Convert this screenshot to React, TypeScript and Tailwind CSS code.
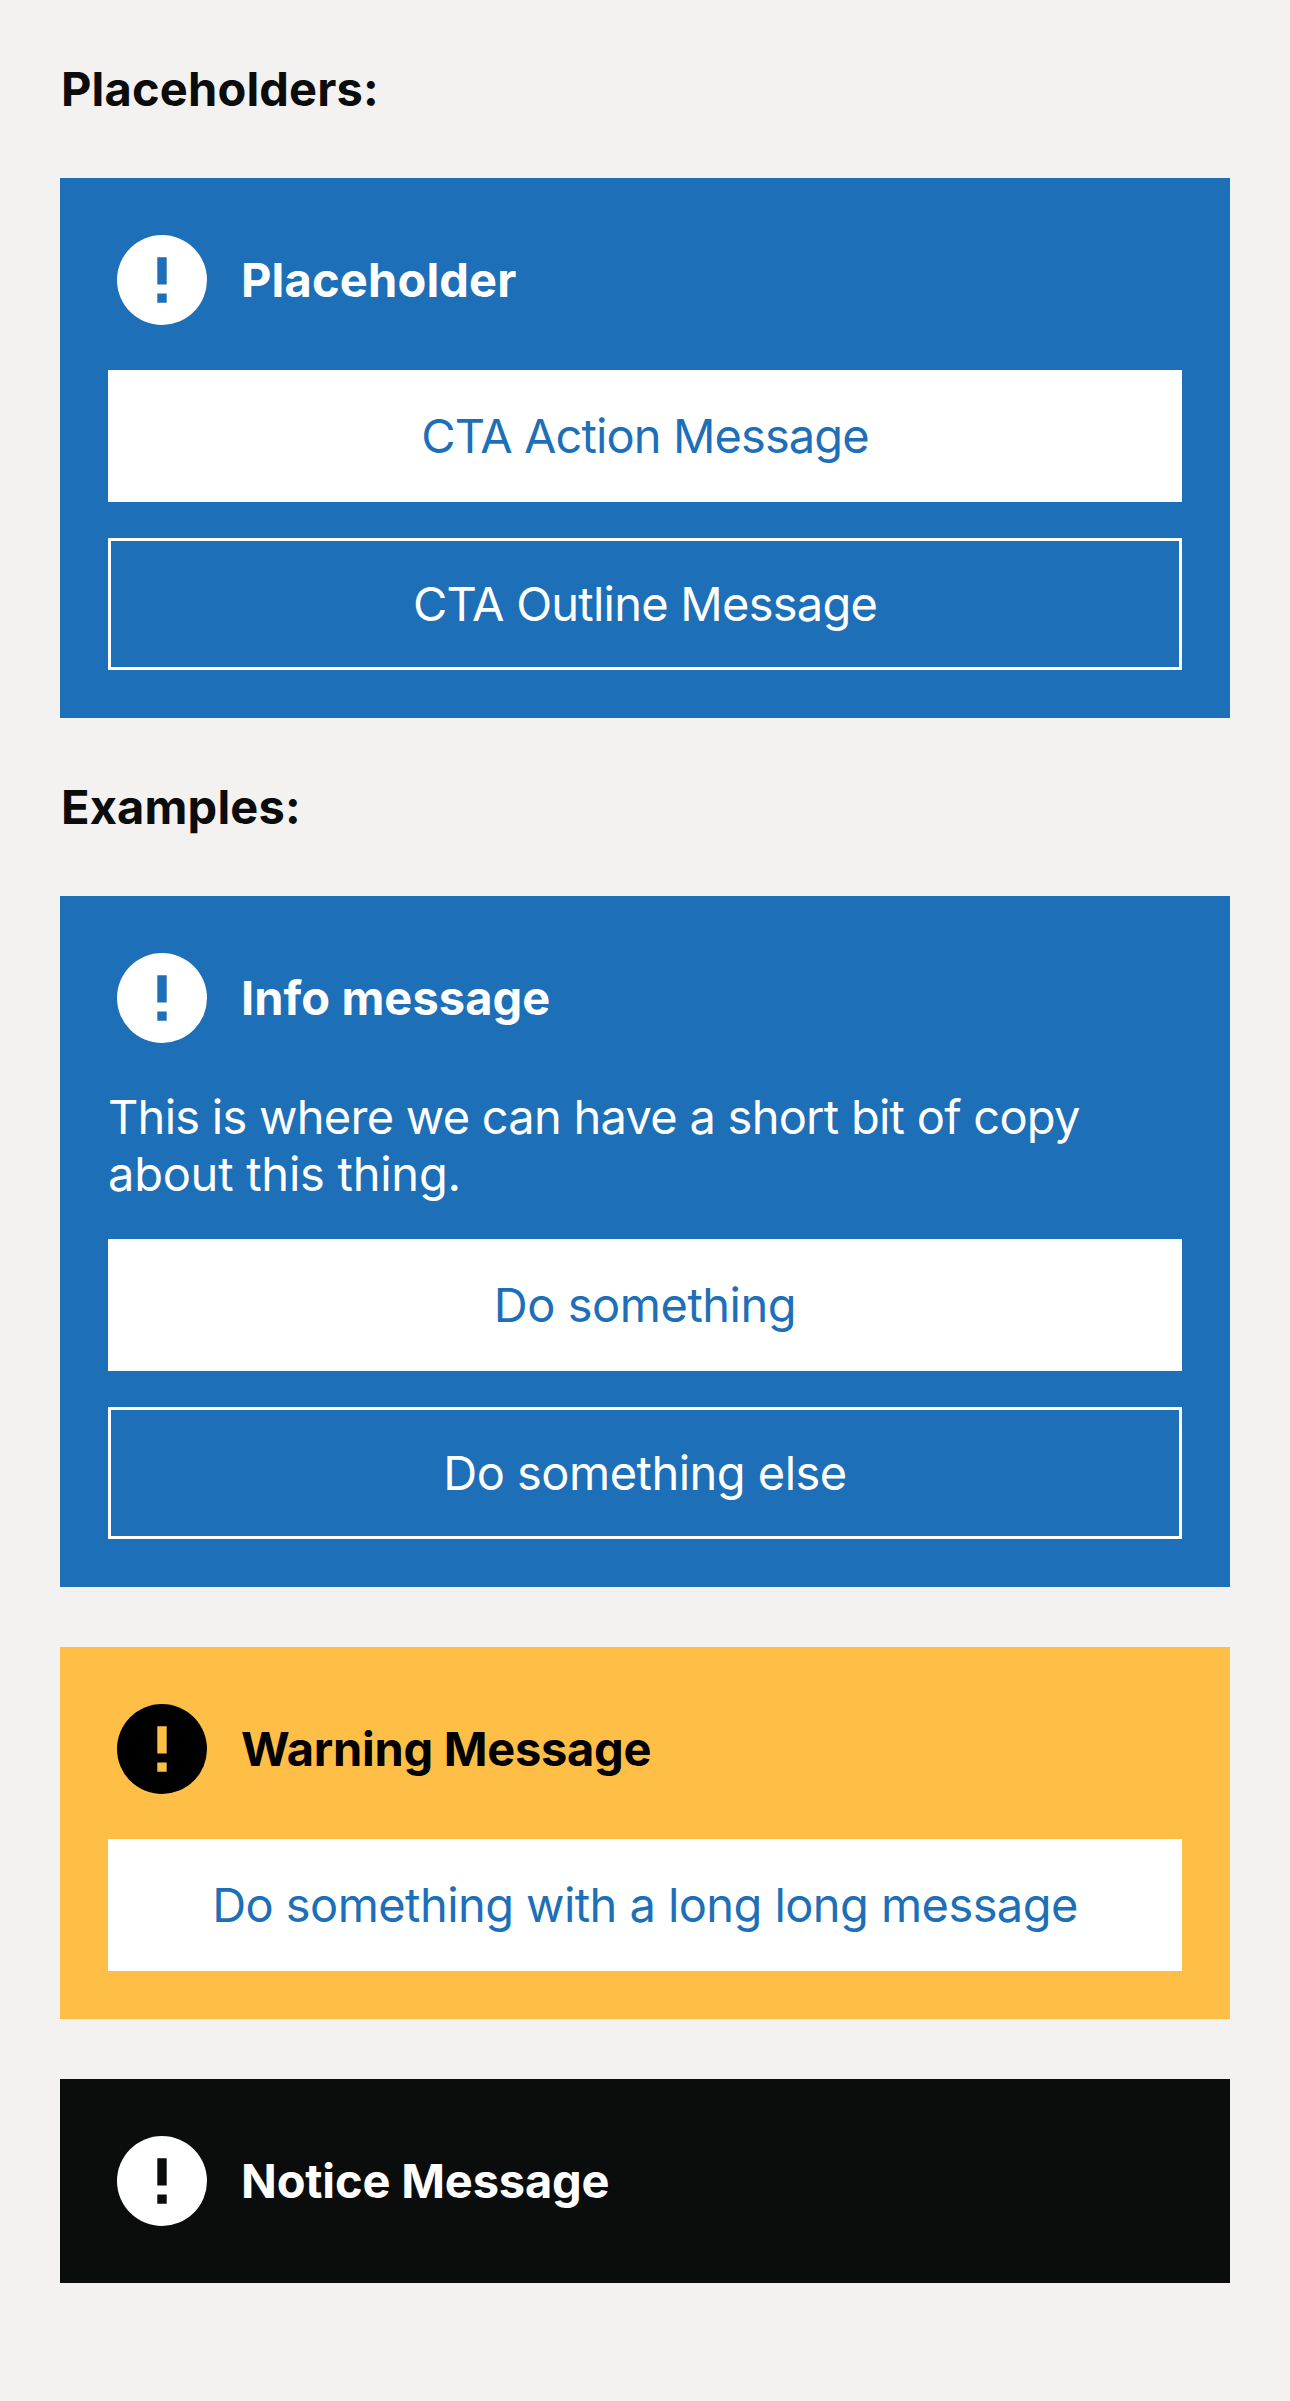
import React from 'react';

type Tone = 'info' | 'warning' | 'notice';
type Line = { text: string; tracking: string };
type Action = Line & { outline?: boolean };

const surface: Record<Tone, string> = {
  info: 'bg-[#1d6fb8] text-white',
  warning: 'bg-[#ffbf47] text-black',
  notice: 'bg-[#0b0c0c] text-white',
};

const mark: Record<Tone, string> = {
  info: 'fill-[#1d6fb8]',
  warning: 'fill-[#ffbf47]',
  notice: 'fill-[#0b0c0c]',
};

function Heading({ children }: { children: string }) {
  return (
    <h2 className="my-[60px] pl-px text-[47px] font-bold leading-[58px] tracking-[0.17px]">{children}</h2>
  );
}

function AlertIcon({ tone }: { tone: Tone }) {
  return (
    <svg viewBox="0 0 90 90" className="size-[90px] shrink-0" aria-hidden="true">
      <circle cx="45" cy="45" r="45" className={tone === 'warning' ? 'fill-black' : 'fill-white'} />
      <path d="M40.3 22.3h9.4v27.2h-9.4zM40.3 58.5h9.4v9.2h-9.4z" className={mark[tone]} />
    </svg>
  );
}

function Card({ tone, title, body, actions }: { tone: Tone; title: Line; body?: Line[]; actions?: Action[] }) {
  return (
    <section className={`flex flex-col px-12 pt-[57px] ${actions ? 'pb-12' : 'pb-[57px]'} ${surface[tone]}`}>
      <div className="flex h-[90px] items-center gap-[34px] pl-[9px]">
        <AlertIcon tone={tone} />
        <h3 className={`text-[47px] font-bold leading-[58px] ${title.tracking}`}>{title.text}</h3>
      </div>
      {body && (
        <p className="mt-[45px] text-[47px] leading-[57px]">
          {body.map((line) => (
            <span key={line.text} className={`block whitespace-nowrap ${line.tracking}`}>
              {line.text}
            </span>
          ))}
        </p>
      )}
      {actions && (
        <div className={`flex flex-col gap-9 ${body ? 'mt-[37px]' : 'mt-[45px]'}`}>
          {actions.map((a) => (
            <button
              key={a.text}
              className={`h-[132px] w-full whitespace-nowrap text-[47px] leading-[58px] ${a.tracking} ${
                a.outline ? 'border-[3px] border-white text-white' : 'bg-white text-[#1d6fb8]'
              }`}
            >
              {a.text}
            </button>
          ))}
        </div>
      )}
    </section>
  );
}

export default function App() {
  return (
    <main className="flex h-[2401px] w-[1290px] flex-col bg-[#f3f2f1] px-[60px] font-['Inter',sans-serif] text-[#0b0c0c]">
      <Heading>Placeholders:</Heading>
      <Card
        tone="info"
        title={{ text: 'Placeholder', tracking: 'tracking-[0.17px]' }}
        actions={[
          { text: 'CTA Action Message', tracking: 'tracking-[-0.9px]' },
          { text: 'CTA Outline Message', tracking: 'tracking-[-0.76px]', outline: true },
        ]}
      />
      <Heading>Examples:</Heading>
      <div className="flex flex-col gap-[60px]">
        <Card
          tone="info"
          title={{ text: 'Info message', tracking: 'tracking-[0.06px]' }}
          body={[
            { text: 'This is where we can have a short bit of copy', tracking: 'tracking-[-0.74px]' },
            { text: 'about this thing.', tracking: 'tracking-[-0.25px]' },
          ]}
          actions={[
            { text: 'Do something', tracking: 'tracking-[-0.47px]' },
            { text: 'Do something else', tracking: 'tracking-[-0.52px]', outline: true },
          ]}
        />
        <Card
          tone="warning"
          title={{ text: 'Warning Message', tracking: 'tracking-[-0.27px]' }}
          actions={[{ text: 'Do something with a long long message', tracking: 'tracking-[-0.57px]' }]}
        />
        <Card tone="notice" title={{ text: 'Notice Message', tracking: 'tracking-[-0.17px]' }} />
      </div>
    </main>
  );
}
